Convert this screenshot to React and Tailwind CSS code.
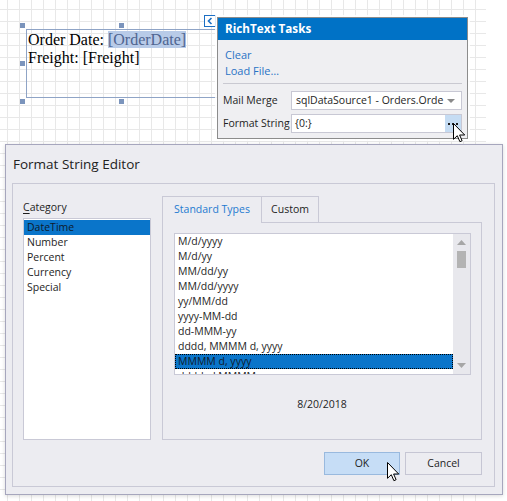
const FORMATS = [
  'M/d/yyyy',
  'M/d/yy',
  'MM/dd/yy',
  'MM/dd/yyyy',
  'yy/MM/dd',
  'yyyy-MM-dd',
  'dd-MMM-yy',
  'dddd, MMMM d, yyyy',
  'MMMM d, yyyy',
  'dddd, d MMMM',
];

const CATEGORIES = ['DateTime', 'Number', 'Percent', 'Currency', 'Special'];

const Cursor = ({ className }) => (
  <svg className={className} width="13" height="20" viewBox="0 0 13 20">
    <path d="M.5.5v15.8l3.8-3.6 2.6 6 2.2-1-2.5-5.7h5.1z" fill="#fff" stroke="#000" strokeWidth="1" strokeLinejoin="round" />
  </svg>
);

const Handle = ({ className }) => <div className={`absolute w-[5px] h-[5px] bg-[#7b94bc] ${className}`} />;

const App = () => {
  return (
    <div className="relative w-[507px] h-[501px] bg-white overflow-hidden font-['Open_Sans',sans-serif] text-[10.5px] text-[#1e1e1e]">
      {/* Design surface grid */}
      <div className="absolute left-0 top-0 w-[486px] h-[501px] bg-[linear-gradient(to_right,#e8e8e8_1px,transparent_1px),linear-gradient(to_bottom,#e8e8e8_1px,transparent_1px)] bg-[size:12px_12px] bg-[position:7px_9px]" />

      {/* RichText control */}
      <div className="absolute left-[26px] top-[29px] w-[194px] h-[69px] border border-[#8fa4c6] pl-px pt-px font-['Liberation_Serif',serif] text-[16px] leading-[18px] text-black">
        <div>
          Order Date: <span className="bg-[#b8cbe8] text-[#4f6590]">[OrderDate]</span>
        </div>
        <div>Freight: [Freight]</div>
      </div>
      <Handle className="left-[20px] top-[23px]" />
      <Handle className="left-[119px] top-[23px]" />
      <Handle className="left-[20px] top-[61px]" />
      <Handle className="left-[20px] top-[99px]" />
      <Handle className="left-[119px] top-[99px]" />

      {/* Smart tag */}
      <div className="absolute left-[204px] top-[15px] w-[12px] h-[12px] border border-[#1c6fc4] bg-white flex items-center justify-center">
        <svg width="6" height="8" viewBox="0 0 6 8">
          <path d="M4.5 1 1.5 4l3 3" fill="none" stroke="#1c6fc4" strokeWidth="1.6" />
        </svg>
      </div>

      {/* RichText Tasks popup */}
      <div className="absolute left-[217px] top-[17px] w-[251px] h-[122px] border border-[#8c8c8c] bg-[#efeff2] shadow-[0_0_0_2px_rgba(255,255,255,0.85)] flex flex-col">
        <div className="h-[22px] bg-[#0072c6] text-white font-bold text-[11.7px] px-[7px] flex items-center">RichText Tasks</div>
        <div className="px-[5px] pt-[7px] flex flex-col">
          <div className="pl-[2px] text-[#2a73c5] text-[11px] leading-[16px]">Clear</div>
          <div className="pl-[2px] text-[#2a73c5] text-[11px] leading-[16px]">Load File…</div>
          <div className="mt-[4px] h-px bg-[#c9c9d1]" />
          <div className="mt-[7px] flex items-center h-[19px]">
            <span className="w-[68px] whitespace-nowrap">Mail Merge</span>
            <div className="flex-1 h-[19px] border border-[#c8c8d4] bg-white flex items-center pl-[4px] pr-[6px]">
              <span className="flex-1 whitespace-nowrap overflow-hidden">sqlDataSource1 - Orders.Orde</span>
              <svg width="8" height="4" viewBox="0 0 8 4">
                <path d="M0 0h8L4 4z" fill="#8a8a8a" />
              </svg>
            </div>
          </div>
          <div className="mt-[4px] flex items-center h-[19px]">
            <span className="w-[68px] whitespace-nowrap">Format String</span>
            <div className="flex-1 h-[19px] border border-[#c8c8d4] bg-white flex items-center pl-[3px]">
              <span className="flex-1">{'{0:}'}</span>
              <div className="w-[16px] h-[17px] bg-[#c5dcf3] flex items-end justify-center pb-[7px] gap-[2px]">
                <span className="w-[2px] h-[2px] bg-[#1e1e1e]" />
                <span className="w-[2px] h-[2px] bg-[#1e1e1e]" />
                <span className="w-[2px] h-[2px] bg-[#1e1e1e]" />
              </div>
            </div>
          </div>
        </div>
      </div>
      <Cursor className="absolute left-[453px] top-[123px]" />

      {/* Format String Editor dialog */}
      <div className="absolute left-[5px] top-[144px] w-[498px] h-[351px] border border-[#a6a6bd] bg-[#ececf1] shadow-[0_1px_4px_rgba(0,0,0,0.15)] flex flex-col">
        <div className="h-[38px] pl-[7px] flex items-center text-[13.5px] text-[#222]">Format String Editor</div>
        <div className="ml-[6px] mr-[7px] h-[304px] border border-[#c9c9d6] pt-[12px] pl-[10px] pr-[12px] flex flex-col">
          <div className="flex gap-[11px] h-[244px]">
            {/* Category */}
            <div className="w-[128px] flex flex-col">
              <div className="h-[22px] pt-[4px] leading-[15px]">
                <span className="underline underline-offset-2">C</span>ategory
              </div>
              <div className="h-[222px] border border-[#c9c9d6] bg-white py-px">
                {CATEGORIES.map((c, i) => (
                  <div
                    key={c}
                    className={`h-[15px] leading-[14px] pl-[3px] ${i === 0 ? 'bg-[#0a75ca] text-[#0e1a2a]' : ''}`}
                  >
                    {c}
                  </div>
                ))}
              </div>
            </div>

            {/* Tabs */}
            <div className="w-[320px] flex flex-col">
              <div className="h-[27px] flex">
                <div className="w-[99px] border-t border-l border-[#c9c9d6] text-[#1e7ad0] flex items-center justify-center">Standard Types</div>
                <div className="w-[58px] border border-[#c9c9d6] flex items-center justify-center">Custom</div>
                <div className="flex-1 border-b border-[#c9c9d6]" />
              </div>
              <div className="h-[217px] border-x border-b border-[#c9c9d6] pt-[10px] pl-[11px] flex flex-col">
                <div className="w-[297px] h-[142px] border border-[#c9c9d6] bg-white flex">
                  <div className="flex-1 overflow-hidden">
                    {FORMATS.map((f, i) => (
                      <div
                        key={f}
                        className={`h-[15px] leading-[14px] pl-[3px] whitespace-nowrap ${
                          i === 8 ? 'bg-[#0a75ca] text-[#0e1a2a] outline outline-1 outline-dotted outline-black -outline-offset-1' : ''
                        }`}
                      >
                        {f}
                      </div>
                    ))}
                  </div>
                  <div className="w-[17px] bg-[#e8e8ed] flex flex-col items-center">
                    <svg className="mt-[6px]" width="9" height="5" viewBox="0 0 9 5">
                      <path d="M0 5h9L4.5 0z" fill="#a6a6a6" />
                    </svg>
                    <div className="mt-[6px] w-[9px] h-[17px] bg-[#b3b3b3]" />
                    <div className="flex-1" />
                    <svg className="mb-[6px]" width="9" height="5" viewBox="0 0 9 5">
                      <path d="M0 0h9L4.5 5z" fill="#a6a6a6" />
                    </svg>
                  </div>
                </div>
                <div className="mt-[22px] pr-[11px] text-center leading-[15px]">8/20/2018</div>
              </div>
            </div>
          </div>

          {/* Buttons */}
          <div className="mt-[12px] flex justify-end gap-[5px]">
            <div className="w-[76px] h-[23px] border border-[#99b9de] bg-[#c6ddf6] flex items-center justify-center">OK</div>
            <div className="w-[77px] h-[23px] border border-[#c6c6d4] bg-[#ececf1] flex items-center justify-center">Cancel</div>
          </div>
        </div>
      </div>
      <Cursor className="absolute left-[387px] top-[462px]" />
    </div>
  );
};

export default App;
